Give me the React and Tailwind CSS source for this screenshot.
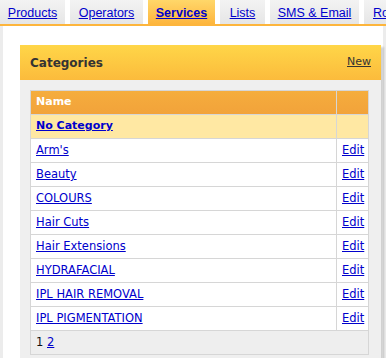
const tabs = [
  { label: "Products", w: "w-[65px] justify-center" },
  { label: "Operators", w: "w-[73px] justify-center" },
  { label: "Services", w: "w-[67px] justify-center", active: true },
  { label: "Lists", w: "w-[45px] justify-center" },
  { label: "SMS & Email", w: "w-[89px] justify-center" },
  { label: "Ro", w: "w-[40px] justify-start pl-[9px]" },
];

const rows = [
  "Arm's",
  "Beauty",
  "COLOURS",
  "Hair Cuts",
  "Hair Extensions",
  "HYDRAFACIAL",
  "IPL HAIR REMOVAL",
  "IPL PIGMENTATION",
];

export default function App() {
  return (
    <div className="h-[358px] w-[386px] overflow-hidden bg-white font-['DejaVu_Sans',Verdana,sans-serif]">
      <div className="flex gap-[5px] overflow-hidden border-b-2 border-[#fdb53c] font-['Liberation_Sans',Arial,sans-serif] text-[12.5px]">
        {tabs.map((t) => (
          <a
            key={t.label}
            href="#"
            className={`flex h-[24px] shrink-0 items-center whitespace-nowrap pt-[2px] text-[#0000cc] underline ${t.w} ${
              t.active
                ? "bg-gradient-to-b from-[#ffd769] to-[#fdb53c] font-bold"
                : "bg-gradient-to-b from-[#f3f3f3] to-[#e6e6e6]"
            }`}
          >
            {t.label}
          </a>
        ))}
      </div>

      <div className="flex h-[332px] border-l-[3px] border-r-[3px] border-[#ececec] pl-[17px] pt-[19px]">
        <div className="w-[361px] shadow-[3px_2px_2px_rgba(0,0,0,0.18)]">
          <div className="flex h-[35px] items-center justify-between bg-gradient-to-b from-[#ffd648] to-[#fbbb3c] pl-[10px] pr-[10px] text-[#333]">
            <span className="text-[12px] font-bold">Categories</span>
            <a href="#" className="text-[11px] text-[#333] underline">
              New
            </a>
          </div>
          <div className="h-[300px] bg-[#efefef] px-[10px] pt-[10px]">
            <table className="w-[339px] border-collapse text-[11.5px]">
              <tbody>
                <tr className="h-[24px] bg-gradient-to-b from-[#f5ad3d] to-[#f2a23a]">
                  <td className="border border-[#d6d6d6] pl-[5px] text-[11px] font-bold text-white">
                    Name
                  </td>
                  <td className="w-[32px] border border-[#d6d6d6]"></td>
                </tr>
                <tr className="h-[24px] bg-[#ffe8a3]">
                  <td className="border border-[#d6d6d6] pl-[5px] text-[11px] font-bold">
                    <a href="#" className="text-[#0000cc] underline">
                      No Category
                    </a>
                  </td>
                  <td className="border border-[#d6d6d6]"></td>
                </tr>
                {rows.map((r) => (
                  <tr key={r} className="h-[24px] bg-white">
                    <td className="border border-[#d6d6d6] pl-[5px]">
                      <a href="#" className="text-[#0000cc] underline">
                        {r}
                      </a>
                    </td>
                    <td className="border border-[#d6d6d6] pl-[5px]">
                      <a href="#" className="text-[#0000cc] underline">
                        Edit
                      </a>
                    </td>
                  </tr>
                ))}
                <tr className="h-[24px] bg-[#eeeeee]">
                  <td colSpan={2} className="border border-[#d6d6d6] pl-[5px] text-[#111]">
                    1{" "}
                    <a href="#" className="text-[#0000cc] underline">
                      2
                    </a>
                  </td>
                </tr>
              </tbody>
            </table>
          </div>
        </div>
      </div>
    </div>
  );
}
